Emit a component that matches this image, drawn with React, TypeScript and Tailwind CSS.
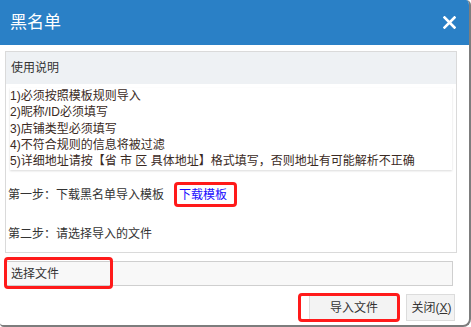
import React from "react";

const rules = [
  "1)必须按照模板规则导入",
  "2)昵称/ID必须填写",
  "3)店铺类型必须填写",
  "4)不符合规则的信息将被过滤",
  "5)详细地址请按【省 市 区 具体地址】格式填写，否则地址有可能解析不正确",
];

const App = () => {
  return (
    <div
      className="w-[471px] h-[327px] bg-white text-[#333]"
      style={{ fontFamily: '"Liberation Sans", "Noto Sans CJK SC", sans-serif' }}
    >
      <div className="w-[471px] h-[327px] flex flex-col bg-white border-r-2 border-b-2 border-[#7d7d7d] rounded-tr-[5px] rounded-bl-[4px] rounded-br-[8px] overflow-hidden">
        {/* title bar */}
        <div className="h-[45px] shrink-0 bg-[#2a80c6] flex items-center justify-between pl-[10px] pr-[13px]">
          <span className="text-[17px] text-white">黑名单</span>
          <svg width="13" height="13" viewBox="0 0 13 13">
            <path d="M1.5 1.5 L11.5 11.5 M11.5 1.5 L1.5 11.5" stroke="white" strokeWidth="2.6" strokeLinecap="square" />
          </svg>
        </div>

        <div className="pl-[5px] pr-[12px] pt-[6px]">
          {/* instructions panel */}
          <div className="border border-[#dadada]">
            <div className="h-[32px] bg-[#eef1f4] pl-[5px] flex items-center text-[12px]">使用说明</div>
            <div className="mx-[4px] mt-[4px] pb-[1px] text-[12px] leading-[16.25px] text-[#3a2a24] shadow-[0_1px_2px_rgba(0,0,0,0.15)]">
              {rules.map((r) => (
                <div key={r} className="whitespace-nowrap">{r}</div>
              ))}
            </div>
            <div className="mt-[12px] h-[25px] flex items-center pl-[2px] text-[12px]">
              <span>第一步：下载黑名单导入模板</span>
              <span className="ml-[10px] h-[25px] w-[63px] border-[3px] border-[#ff1a1a] rounded-[4px] flex items-center pl-[2px]">
                <a href="#" className="text-[#1a0dff] text-[12px]">下载模板</a>
              </span>
            </div>
            <div className="mt-[19px] pl-[2px] pb-[10px] text-[12px] leading-[16px]">第二步：请选择导入的文件</div>
          </div>

          {/* file input */}
          <div className="relative mt-[8px]">
            <div className="h-[25px] w-[448px] border border-[#cfcfcf] bg-[#f8f8f8] pl-[5px] flex items-center text-[12px]">
              选择文件
            </div>
            <div className="absolute left-[-1px] top-[-4px] w-[109px] h-[32px] border-[3px] border-[#ff1a1a] rounded-[4px]" />
          </div>

          {/* buttons */}
          <div className="mt-[8px] flex justify-end gap-[7px] pr-[2px]">
            <div className="relative">
              <button className="w-[90px] h-[27px] bg-[#f3f3f3] border border-[#dcdcdc] text-[12px] text-[#333]">
                导入文件
              </button>
              <div className="absolute left-[-11px] top-[-1px] w-[102px] h-[29px] border-[3px] border-[#ff1a1a] rounded-[4px]" />
            </div>
            <button className="w-[49px] h-[27px] bg-[#f3f3f3] border border-[#dcdcdc] text-[12px] text-[#333] whitespace-nowrap overflow-hidden pl-[2px]">
              关闭(<span className="underline">X</span>)
            </button>
          </div>
        </div>
      </div>
    </div>
  );
};

export default App;
